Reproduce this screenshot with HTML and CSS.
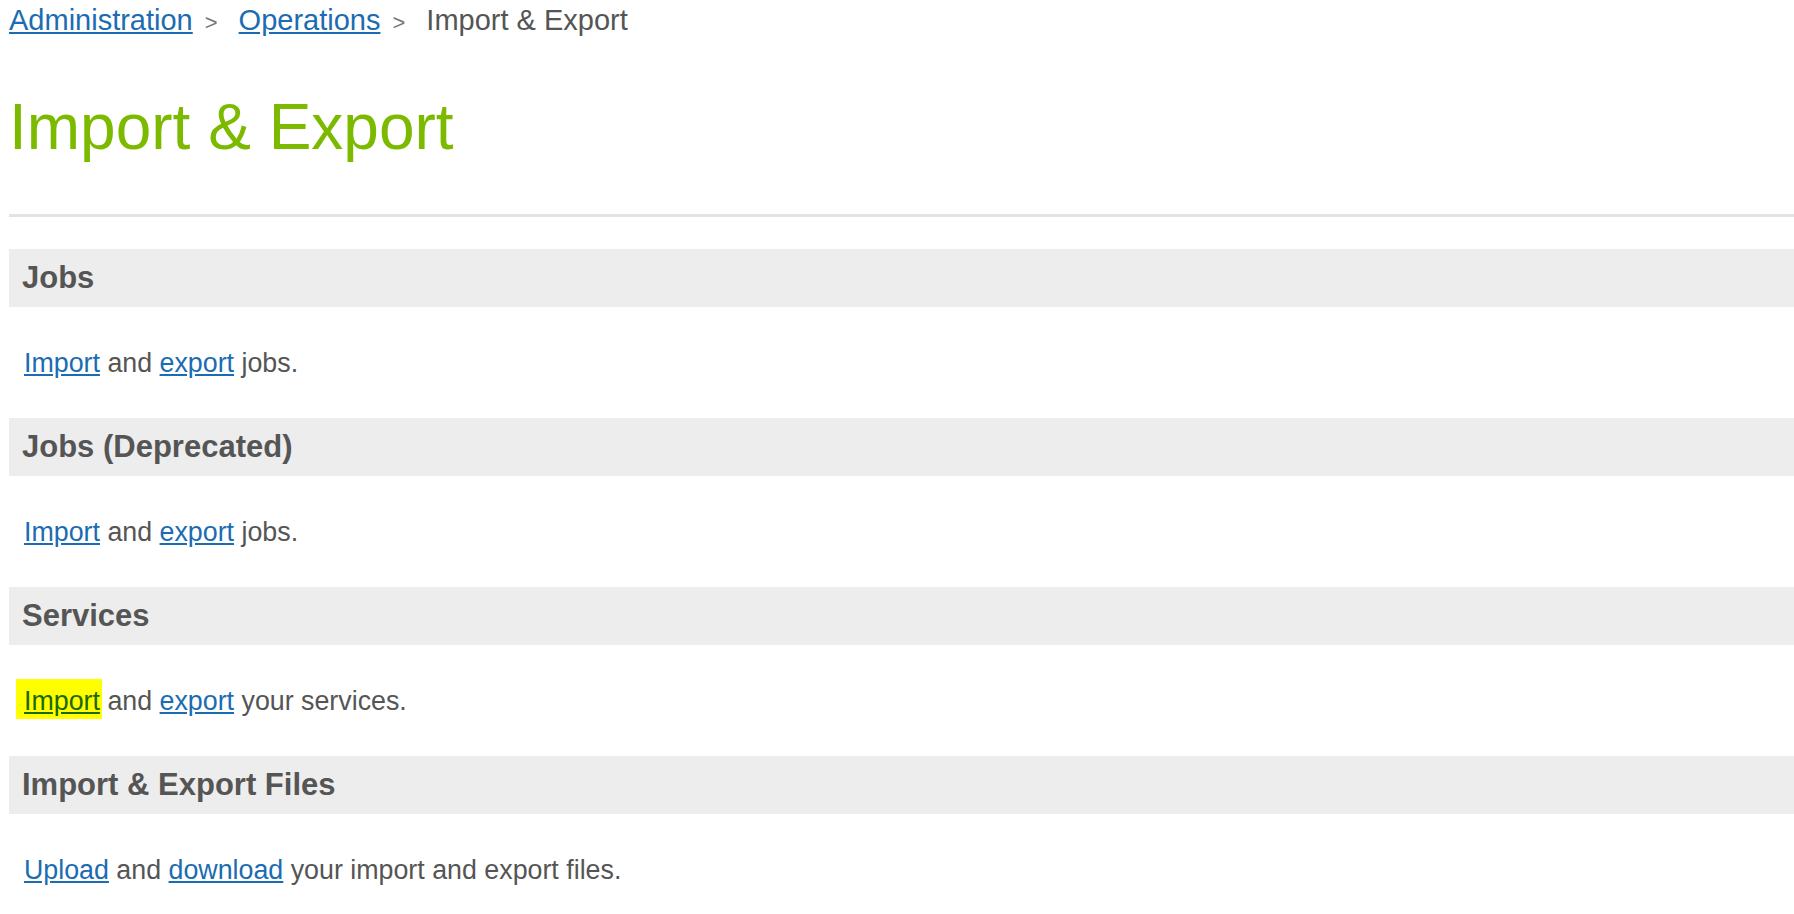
FILE: index.html
```html
<!DOCTYPE html>
<html lang="en">
<head>
<meta charset="utf-8">
<title>Import &amp; Export</title>
<link rel="stylesheet" href="styles.css">
</head>
<body>
<div class="page">
  <nav class="crumbs">
    <a href="#">Administration</a><span class="sep">&gt;</span><a href="#">Operations</a><span class="sep">&gt;</span><span class="current">Import &amp; Export</span>
  </nav>
  <h1 class="title">Import &amp; Export</h1>
  <hr class="rule">
  <section class="group">
    <h2 class="group-head">Jobs</h2>
    <p class="group-body"><a href="#">Import</a> and <a href="#">export</a> jobs.</p>
  </section>
  <section class="group">
    <h2 class="group-head">Jobs (Deprecated)</h2>
    <p class="group-body"><a href="#">Import</a> and <a href="#">export</a> jobs.</p>
  </section>
  <section class="group">
    <h2 class="group-head">Services</h2>
    <p class="group-body"><span class="hl"><a href="#" class="hl-link">Import</a></span> and <a href="#">export</a> your services.</p>
  </section>
  <section class="group">
    <h2 class="group-head">Import &amp; Export Files</h2>
    <p class="group-body"><a href="#">Upload</a> and <a href="#">download</a> your import and export files.</p>
  </section>
</div>
</body>
</html>
```
FILE: styles.css
```css
html, body {
  margin: 0;
  padding: 0;
  background: #ffffff;
}

body {
  font-family: "Liberation Sans", Arial, sans-serif;
  color: #555555;
}

.page {
  padding-left: 9px;
  overflow: hidden;
}

a {
  color: #1b6cb2;
  text-decoration: underline;
}

.crumbs {
  padding-top: 3px;
  height: 34px;
  font-size: 29px;
  line-height: 34px;
  white-space: nowrap;
}

.sep {
  font-size: 22px;
  margin: 0 21px 0 12px;
  color: #777777;
}

.current {
  color: #555555;
}

.title {
  margin: 54px 0 0;
  font-size: 64px;
  line-height: 72px;
  font-weight: normal;
  color: #7cba00;
}

.rule {
  margin: 51px 0 0;
  height: 0;
  border: 0;
  border-top: 3px solid #e3e3e3;
}

.group:first-of-type {
  margin-top: 32px;
}

.group-head {
  margin: 0;
  height: 58px;
  padding-left: 13px;
  background: #ededed;
  font-size: 31px;
  line-height: 58px;
  font-weight: bold;
  color: #555555;
  white-space: nowrap;
}

.group-body {
  margin: 41px 0 40px;
  padding-left: 15px;
  font-size: 26.8px;
  line-height: 30px;
  color: #555555;
}

.hl {
  background: #ffff00;
  padding: 7px 2px 3px 8px;
  margin: 0 -2px 0 -8px;
}

.hl-link {
  color: #1a6a00;
}
```
